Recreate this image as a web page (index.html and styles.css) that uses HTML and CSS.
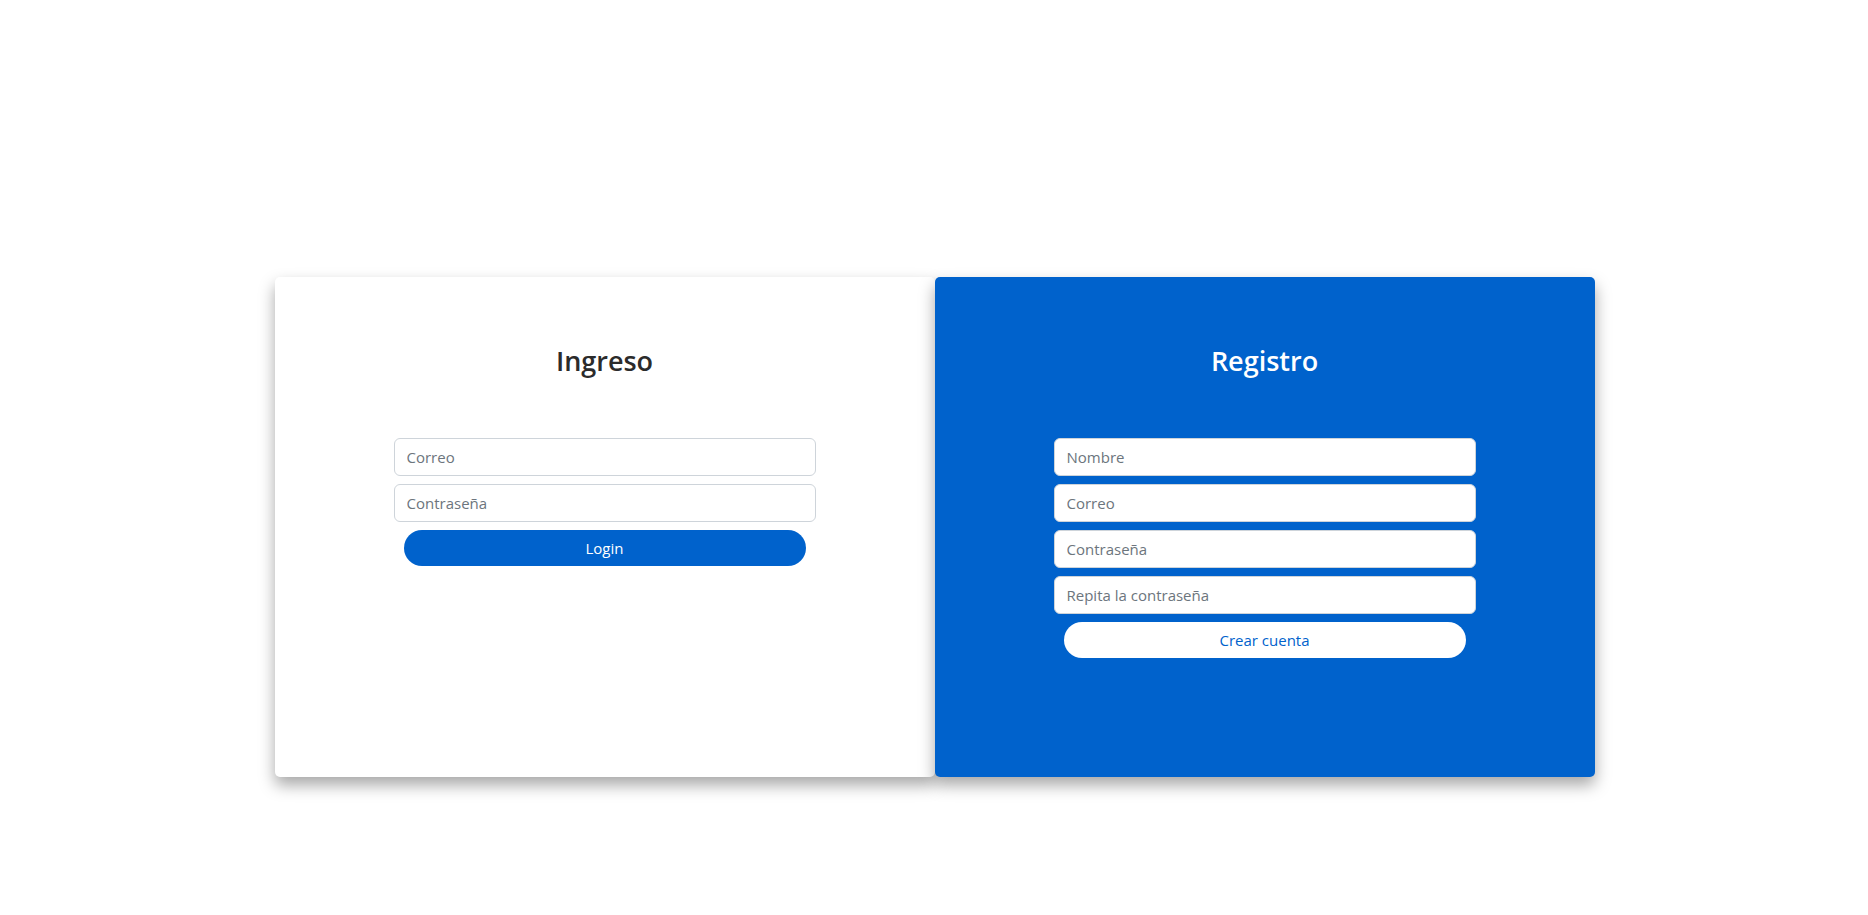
FILE: index.html
```html
<!DOCTYPE html>
<html lang="es">
<head>
<meta charset="utf-8">
<title>Ingreso / Registro</title>
<link rel="stylesheet" href="styles.css">
</head>
<body>
<main class="page">
  <div class="card-pair">
    <section class="panel panel-login">
      <h3 class="panel-title">Ingreso</h3>
      <form class="form">
        <input class="field" type="email" placeholder="Correo">
        <input class="field" type="password" placeholder="Contraseña">
        <button class="btn btn-primary" type="button">Login</button>
      </form>
    </section>
    <section class="panel panel-register">
      <h3 class="panel-title">Registro</h3>
      <form class="form">
        <input class="field" type="text" placeholder="Nombre">
        <input class="field" type="email" placeholder="Correo">
        <input class="field" type="password" placeholder="Contraseña">
        <input class="field" type="password" placeholder="Repita la contraseña">
        <button class="btn btn-light" type="button">Crear cuenta</button>
      </form>
    </section>
  </div>
</main>
</body>
</html>
```

FILE: styles.css
```css
* { box-sizing: border-box; }

html, body {
  margin: 0;
  padding: 0;
  background: #ffffff;
  font-family: "Open Sans", "Noto Sans", sans-serif;
  color: #212529;
}

.page {
  padding-top: 277px;
  padding-bottom: 60px;
  display: flex;
  justify-content: center;
}

.card-pair {
  display: flex;
  width: 1320px;
  margin-left: 1px;
}

.panel {
  width: 660px;
  height: 500px;
  border-radius: 5px;
  box-shadow: 0 8px 16px rgba(0, 0, 0, 0.35);
  display: flex;
  flex-direction: column;
  align-items: center;
  padding-top: 68px;
}

.panel-login {
  background: #ffffff;
  position: relative;
  z-index: 0;
}

.panel-register {
  background: #0062cc;
  color: #ffffff;
  position: relative;
  z-index: 1;
}

.panel-title {
  margin: 0;
  font-size: 27px;
  font-weight: 600;
  line-height: 1.2;
}

.panel-login .panel-title {
  color: #2b2b2b;
}

.form {
  margin-top: 61px;
  width: 422px;
  display: flex;
  flex-direction: column;
  align-items: center;
  gap: 8px;
}

.field {
  width: 100%;
  height: 38px;
  padding: 6px 12px;
  border: 1px solid #ced4da;
  border-radius: 6px;
  background: #ffffff;
  font-family: inherit;
  font-size: 15px;
  color: #495057;
  outline: none;
}

.field::placeholder {
  color: #6c757d;
  opacity: 1;
}

.btn {
  width: 402px;
  height: 36px;
  border: none;
  border-radius: 18px;
  font-family: inherit;
  font-size: 15px;
  cursor: pointer;
}

.btn-primary {
  background: #0062cc;
  color: #ffffff;
}

.btn-light {
  background: #ffffff;
  color: #0062cc;
}
```
